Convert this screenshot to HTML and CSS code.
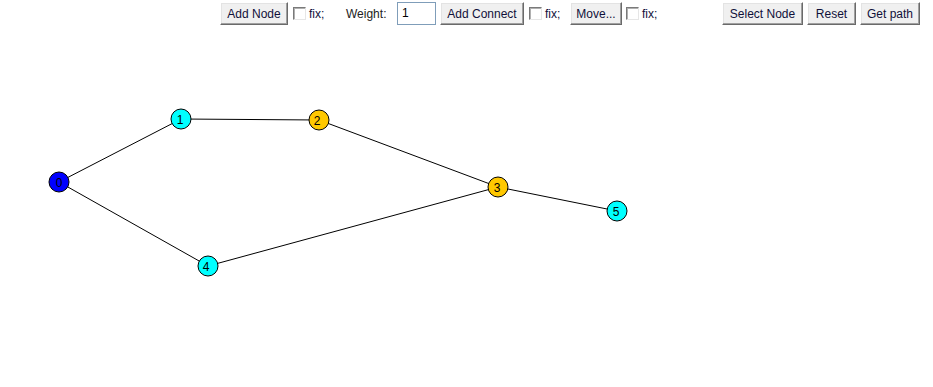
FILE: index.html
```html
<!DOCTYPE html>
<html>
<head>
<meta charset="utf-8">
<link rel="stylesheet" href="styles.css">
</head>
<body>
<div class="toolbar">
  <button class="btn w-addnode">Add Node</button>
  <label class="chk chk-1"><span class="box"></span><span class="lbl">fix;</span></label>
  <span class="weight">Weight:</span>
  <span class="input">1</span>
  <button class="btn w-addconn">Add Connect</button>
  <label class="chk chk-2"><span class="box"></span><span class="lbl">fix;</span></label>
  <button class="btn w-move">Move...</button>
  <label class="chk chk-3"><span class="box"></span><span class="lbl">fix;</span></label>
  <button class="btn w-select">Select Node</button>
  <button class="btn w-reset">Reset</button>
  <button class="btn w-path">Get path</button>
</div>
<svg class="graph" width="933" height="387" viewBox="0 0 933 387">
  <g stroke="#000" stroke-width="1">
    <line x1="59" y1="182" x2="181" y2="119"/>
    <line x1="181" y1="119" x2="319" y2="120"/>
    <line x1="319" y1="120" x2="498" y2="187"/>
    <line x1="59" y1="182" x2="208" y2="266"/>
    <line x1="208" y1="266" x2="498" y2="187"/>
    <line x1="498" y1="187" x2="617" y2="211"/>
  </g>
  <g stroke="#000" stroke-width="1">
    <circle cx="59" cy="182" r="10" fill="#0000ff"/>
    <circle cx="181" cy="119" r="10" fill="#00ffff"/>
    <circle cx="319" cy="120" r="10" fill="#ffc800"/>
    <circle cx="498" cy="187" r="10" fill="#ffc800"/>
    <circle cx="208" cy="266" r="10" fill="#00ffff"/>
    <circle cx="617" cy="211" r="10" fill="#00ffff"/>
  </g>
  <g class="nlabel" text-anchor="middle">
    <text x="59" y="186.5">0</text>
    <text x="180" y="123.5">1</text>
    <text x="317" y="124.5">2</text>
    <text x="497" y="191.5">3</text>
    <text x="206" y="270.5">4</text>
    <text x="616" y="215.5">5</text>
  </g>
</svg>
</body>
</html>
```

FILE: styles.css
```css
html, body {
  margin: 0;
  padding: 0;
  background: #ffffff;
}
body {
  width: 933px;
  height: 387px;
  overflow: hidden;
  position: relative;
  font-family: "Liberation Sans", Arial, sans-serif;
  font-size: 12px;
}
.toolbar {
  position: relative;
  z-index: 1;
  display: flex;
  align-items: center;
  height: 23px;
  padding-top: 2px;
  padding-left: 220px;
}
.toolbar > * {
  flex: none;
}
.btn {
  box-sizing: border-box;
  height: 23px;
  margin: 0;
  padding: 0;
  font-family: "Liberation Sans", Arial, sans-serif;
  font-size: 12px;
  color: #10103a;
  background: #f0f0f0;
  border: 1px solid;
  border-color: #ffffff #6a6a6a #6a6a6a #ffffff;
  box-shadow: inset -1px -1px 0 #a0a0a0, inset 1px 1px 0 #e3e3e3;
  text-align: center;
  line-height: 20px;
  white-space: nowrap;
}
.w-addnode { width: 68px; }
.w-addconn { width: 84px; margin-left: 4px; }
.w-move { width: 52px; }
.w-select { width: 81px; }
.w-reset { width: 49px; margin-left: 4px; }
.w-path { width: 60px; margin-left: 4px; }
.chk {
  display: flex;
  align-items: center;
  margin-left: 5px;
}
.chk-1 { width: 53px; }
.chk-2 { width: 41px; }
.chk-3 { width: 96px; margin-left: 4px; }
.box {
  box-sizing: border-box;
  width: 13px;
  height: 13px;
  background: #ffffff;
  border: 1px solid;
  border-color: #7a7a7a #e6e6e6 #e6e6e6 #7a7a7a;
  box-shadow: inset 1px 1px 0 #b0b0b0;
}
.lbl {
  margin-left: 3px;
  color: #10103a;
}
.weight {
  width: 51px;
  color: #222;
}
.input {
  box-sizing: border-box;
  width: 39px;
  height: 23px;
  padding-left: 4px;
  line-height: 20px;
  border: 1px solid #7f9db9;
  background: #fff;
  color: #000;
}
.graph {
  position: absolute;
  top: 0;
  left: 0;
  z-index: 0;
}
.nlabel {
  font-family: "Liberation Sans", Arial, sans-serif;
  font-size: 12px;
  fill: #000;
}
```
